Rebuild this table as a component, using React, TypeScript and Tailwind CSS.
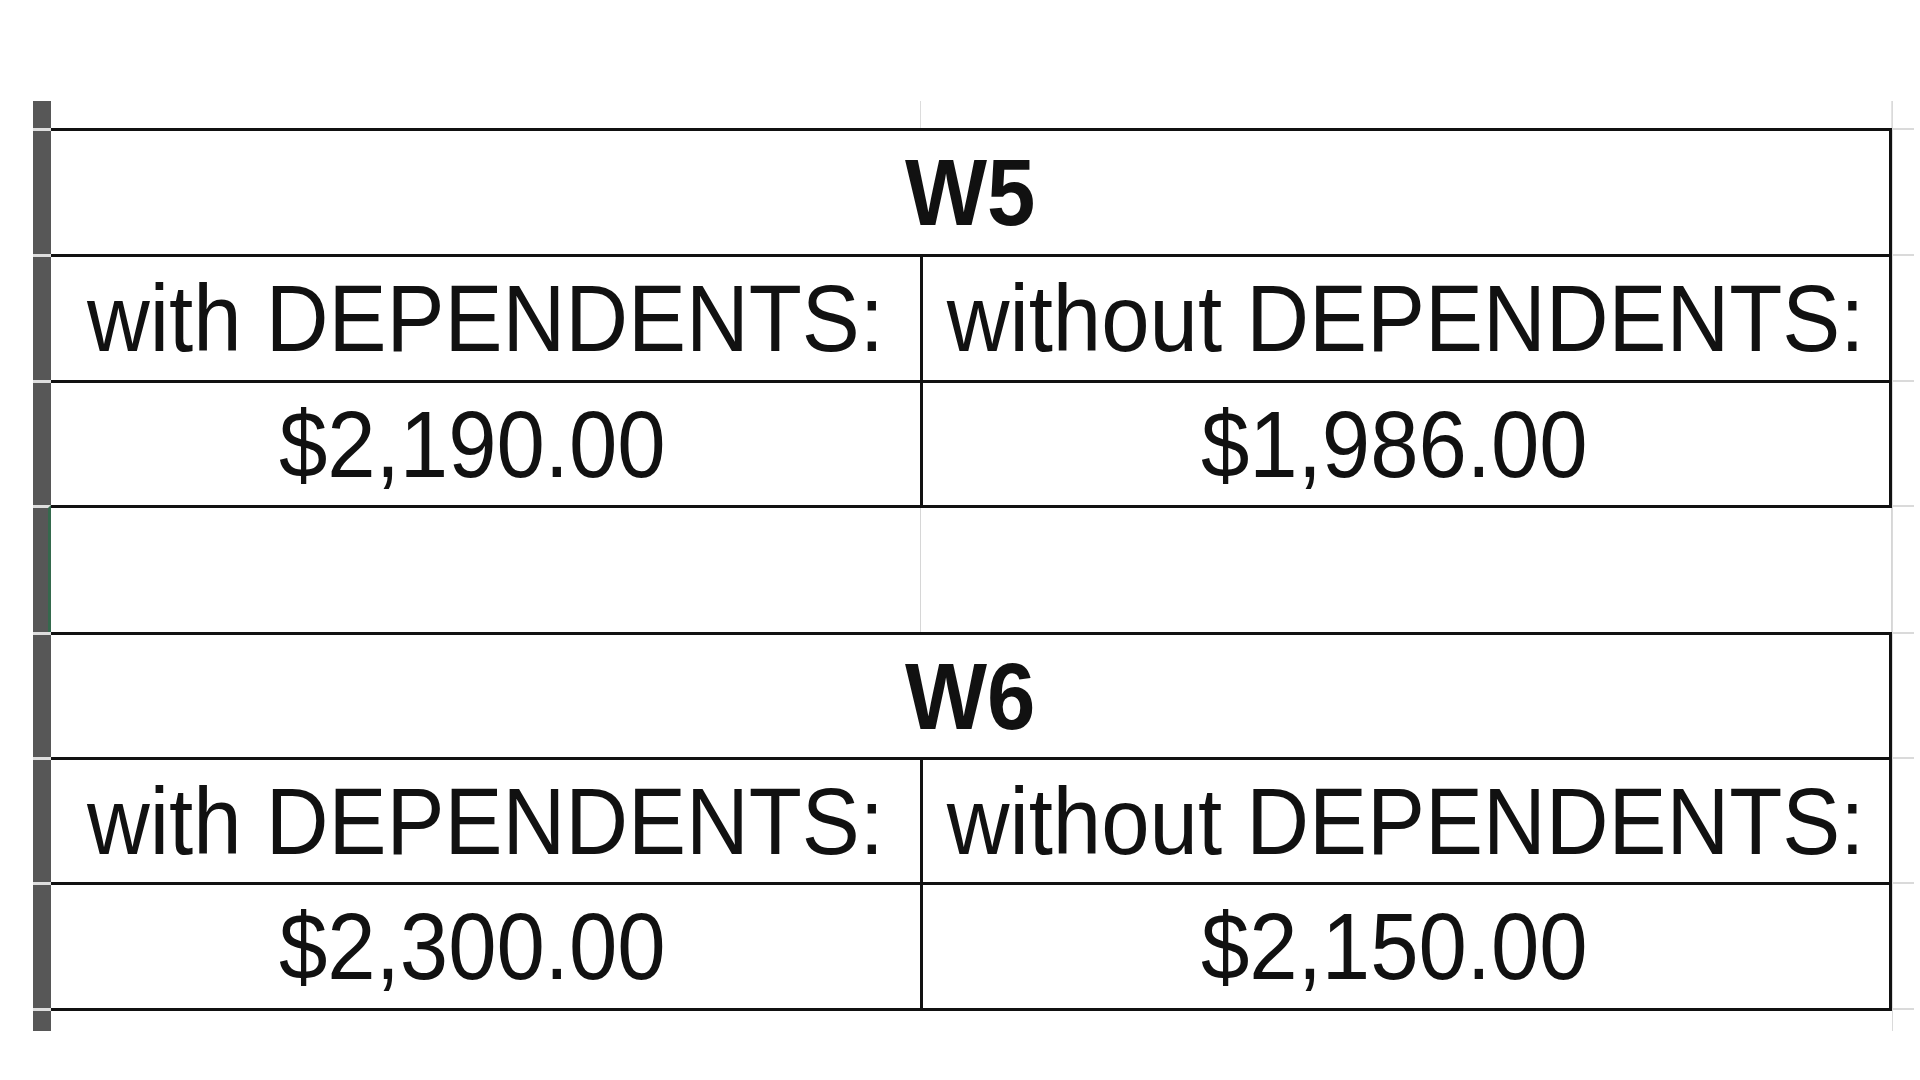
import React from "react";

const ink = "text-[#111111]";

const Bar: React.FC<{ sep?: boolean; selected?: boolean }> = ({ sep = true, selected = false }) => (
  <div
    className={`w-[18px] shrink-0 bg-[#575757] ${sep ? "border-t-[3px] border-t-[#dedede]" : ""} ${
      selected ? "border-r-[3px] border-r-[#35694d]" : ""
    }`}
  />
);

const Gutter: React.FC<{ line?: boolean }> = ({ line = true }) => (
  <div className={`w-[22px] shrink-0 border-l border-l-[#dadada] ${line ? "border-t-2 border-t-[#dadada]" : ""}`} />
);

const Txt: React.FC<{ children: React.ReactNode; bold?: boolean }> = ({ children, bold }) => (
  <span
    className={`inline-block shrink-0 scale-x-[0.915] whitespace-nowrap text-[95px] leading-none ${bold ? "font-bold" : ""}`}
  >
    {children}
  </span>
);

const TitleRow: React.FC<{ title: string; h: string }> = ({ title, h }) => (
  <div className={`flex ${h}`}>
    <Bar />
    <div className="flex w-[1841px] shrink-0 items-center justify-center border-t-[3px] border-r-[3px] border-[#111111]">
      <Txt bold>{title}</Txt>
    </div>
    <Gutter />
  </div>
);

// money cells in the sheet sit a little left of centre (currency format padding)
const PairRow: React.FC<{ left: string; right: string; h: string; money?: boolean }> = ({ left, right, h, money }) => (
  <div className={`flex ${h}`}>
    <Bar />
    <div className="flex w-[1841px] shrink-0 border-t-[3px] border-r-[3px] border-[#111111]">
      <div className={`flex w-[869px] min-w-0 shrink-0 items-center justify-center ${money ? "pr-[26px]" : ""}`}>
        <Txt>{left}</Txt>
      </div>
      <div
        className={`flex min-w-0 flex-1 items-center justify-center border-l-[3px] border-[#111111] ${
          money ? "pr-[24px]" : ""
        }`}
      >
        <Txt>{right}</Txt>
      </div>
    </div>
    <Gutter />
  </div>
);

export default function App() {
  return (
    <div className={`min-h-screen bg-white pt-[101px] pl-[33px] font-['Liberation_Sans',Arial,sans-serif] ${ink}`}>
      {/* row above the block */}
      <div className="flex h-[27px]">
        <Bar sep={false} />
        <div className="flex w-[1841px] shrink-0">
          <div className="w-[870px] border-r border-[#dcdcdc]" />
          <div className="flex-1 border-r border-[#e4e4e4]" />
        </div>
        <Gutter line={false} />
      </div>

      <TitleRow title="W5" h="h-[126px]" />
      <PairRow left="with DEPENDENTS:" right="without DEPENDENTS:" h="h-[126px]" />
      <PairRow left="$2,190.00" right="$1,986.00" h="h-[125px]" money />

      {/* empty spacer row */}
      <div className="flex h-[127px]">
        <Bar selected />
        <div className="flex w-[1841px] shrink-0 border-t-[3px] border-[#111111]">
          <div className="w-[870px] border-r border-[#d6d6d6]" />
          <div className="flex-1 border-r border-[#d6d6d6]" />
        </div>
        <Gutter />
      </div>

      <TitleRow title="W6" h="h-[125px]" />
      <PairRow left="with DEPENDENTS:" right="without DEPENDENTS:" h="h-[125px]" />
      <PairRow left="$2,300.00" right="$2,150.00" h="h-[126px]" money />

      {/* row below the block */}
      <div className="flex h-[23px]">
        <Bar />
        <div className="w-[1841px] shrink-0 border-t-[3px] border-[#111111]" />
        <Gutter />
      </div>
    </div>
  );
}
